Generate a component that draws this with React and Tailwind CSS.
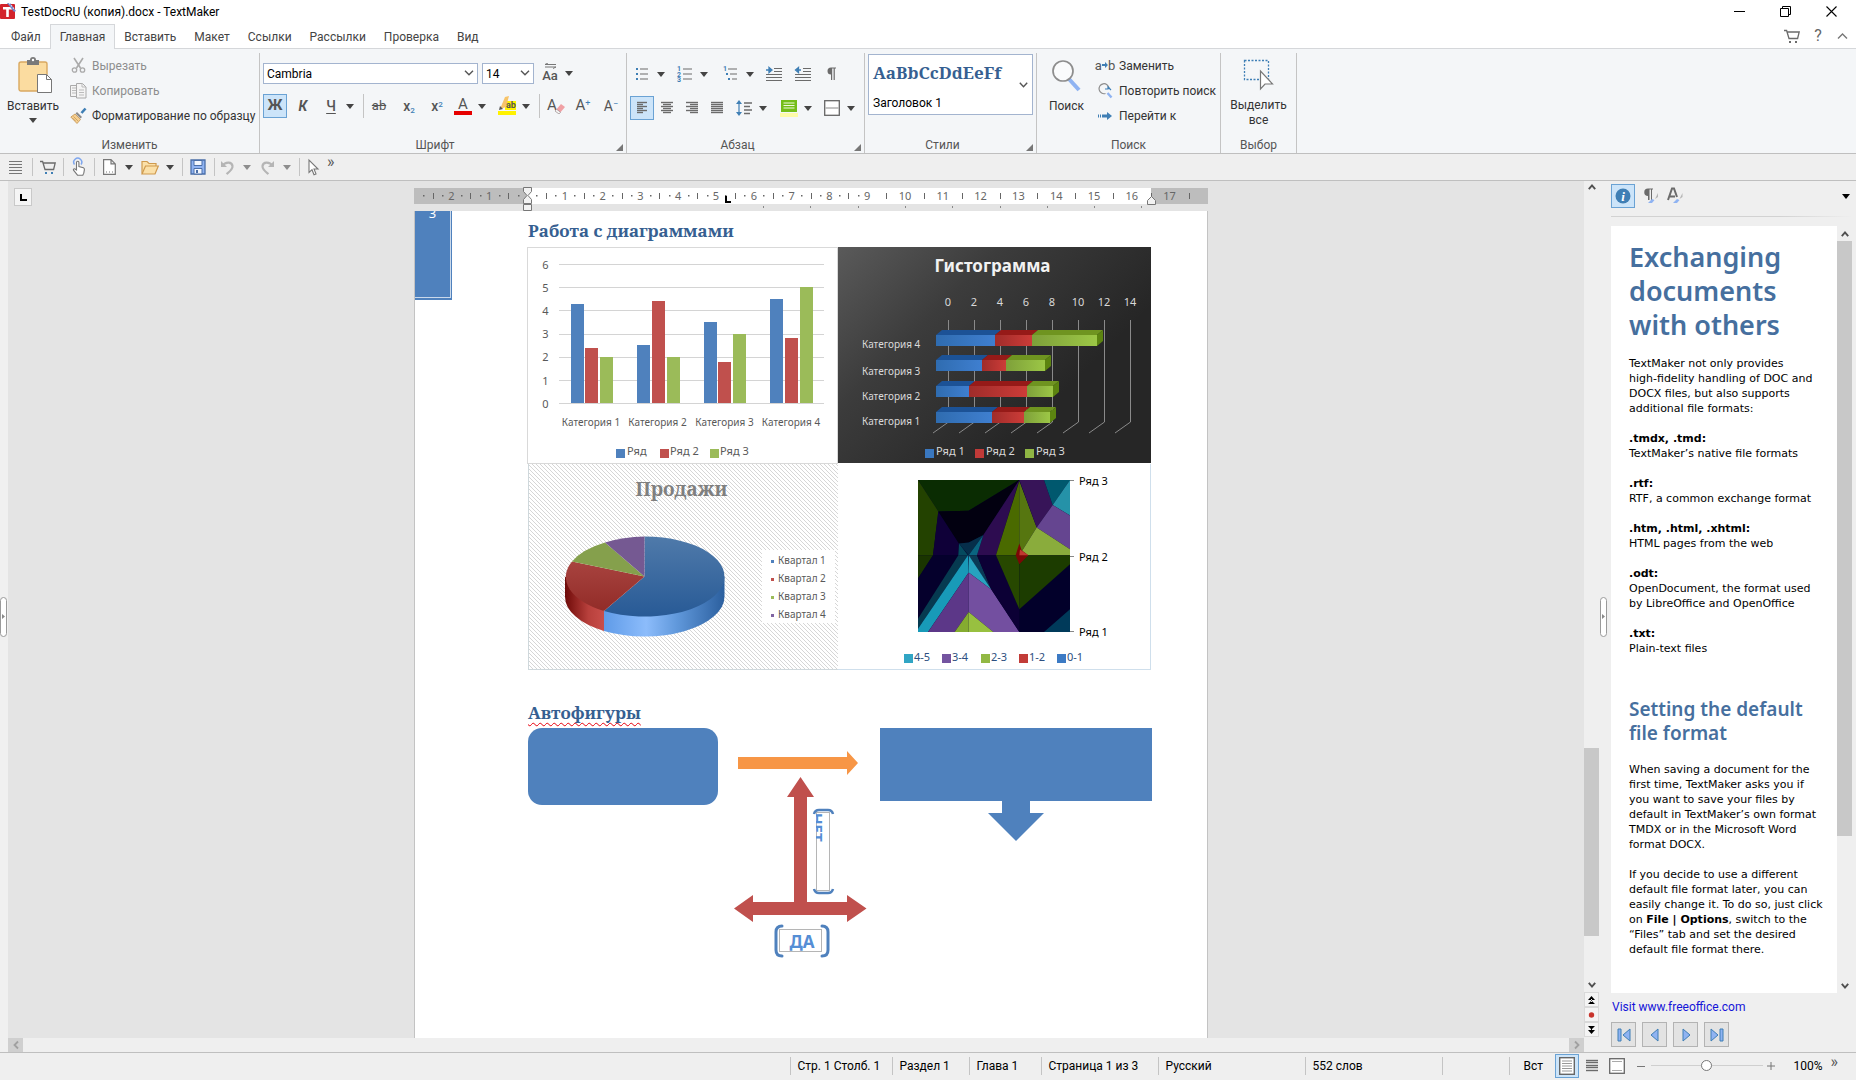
const UI = "font-['Roboto','Liberation_Sans',sans-serif]";
const SERIF = "font-['Noto_Serif','DejaVu_Serif_Condensed','DejaVu_Serif',serif]";

const G = "#6b6b6b";
const B = "#3f7fb5";

function Arrow({ className = "w-3.5 h-6", label = "Ещё", fill = "#444" }) {
  return (
    <button aria-label={label} className={`${className} shrink-0 flex items-center justify-center`}>
      <svg width="8" height="5" viewBox="0 0 8 5"><path d="M0 0h8L4 5z" fill={fill} /></svg>
    </button>
  );
}

function Tool({ label, className = "", active, children }) {
  return (
    <button
      aria-label={label}
      className={`w-6 h-6 shrink-0 flex items-center justify-center text-[#555] ${active ? "bg-[#cce4f9] border border-[#6aa2d4]" : ""} ${className}`}
    >
      {children}
    </button>
  );
}

function Sep({ className = "" }) {
  return <div className={`w-px h-6 shrink-0 bg-[#c4c4c4] ${className}`} />;
}

function Svg({ s = 16, w, h, children }) {
  return (
    <svg width={w || s} height={h || s} viewBox={`0 0 ${w || s} ${h || s}`} fill="none" className="shrink-0 overflow-visible">
      {children}
    </svg>
  );
}

function Lines({ rows, color = G }) {
  return (
    <Svg s={16}>
      {rows.map(([x1, x2, y]) => <path key={y} d={`M${x1} ${y + 0.5}H${x2}`} stroke={color} strokeWidth="1.4" />)}
    </Svg>
  );
}

function Launcher() {
  return (
    <button aria-label="Параметры группы" className="absolute right-0.5 bottom-0.5 w-2 h-2">
      <Svg s={7}><path d="M7 0v7H0z" fill="#777" /></Svg>
    </button>
  );
}

function Group({ title, className, launcher, children }) {
  return (
    <section className={`relative shrink-0 h-[100px] flex flex-col border-r border-[#c4c4c4] ${className}`}>
      <div className="flex-1">{children}</div>
      <div className={`h-4 text-center leading-4 text-[#555] ${launcher ? "pr-4" : ""}`}>{title}</div>
      {launcher && <Launcher />}
    </section>
  );
}

function Cart({ color = G, accent = G }) {
  return (
    <Svg s={16}>
      <path d="M0 2.5h2.6l2.4 8h8.6l1.6-6.5H3.4" stroke={color} strokeWidth="1.3" />
      <path d="M5 13h2v2H5zM11 13h2v2h-2z" fill={accent} />
    </Svg>
  );
}

function TitleBar() {
  return (
    <header className="h-6 shrink-0 bg-white flex items-center text-black">
      <svg width="17" height="17" viewBox="0 0 17 17" className="mr-1 mb-1">
        <rect x="0" y="2" width="15" height="15" rx="1" fill="#d3232b" />
        <path d="M3 5h9v2.4H8.8V15H6.2V7.400H3z" fill="#fff" />
        <path d="M7 1l3 0 6 8-2 1z" fill="#6e83c9" />
        <path d="M9 1l6 7" stroke="#e3e8fa" strokeWidth="1.200" strokeDasharray="1.500 1.500" />
      </svg>
      <h1 className="text-xs pb-px">TestDocRU (копия).docx - TextMaker</h1>
      <div className="ml-auto flex items-center mr-[2px] pb-0.5">
        <button aria-label="Свернуть" className="w-[46px] h-5 flex items-center justify-center"><Svg s={11}><path d="M0 5.5h11" stroke="#000" /></Svg></button>
        <button aria-label="Восстановить" className="w-[46px] h-5 flex items-center justify-center"><Svg s={11}><path d="M.5 2.500h8v8h-8zM2.500 2.500v-2h8v8h-2" stroke="#000" /></Svg></button>
        <button aria-label="Закрыть" className="w-[46px] h-5 flex items-center justify-center"><Svg s={11}><path d="M.5.5l10 10M10.500.5l-10 10" stroke="#000" strokeWidth="1.100" /></Svg></button>
      </div>
    </header>
  );
}

const TABS = ["Файл", "Главная", "Вставить", "Макет", "Ссылки", "Рассылки", "Проверка", "Вид"];

function TabRow() {
  return (
    <nav className="h-[25px] shrink-0 bg-white flex items-end border-b border-[#d5d7da] text-[#444]">
      <div className="flex h-[25px] -mb-px pl-0.5">
        {TABS.map((t, i) => (
          <button
            key={t}
            className={`h-[25px] border-x border-t ${i === 1 ? "px-[9px] bg-[#f4f6f8] border-[#d5d7da]" : "px-2 border-transparent"}`}
          >
            {t}
          </button>
        ))}
      </div>
      <div className="ml-auto flex items-center h-[25px] pr-1">
        <button aria-label="Магазин" className="w-6 flex justify-center"><Cart /></button>
        <button aria-label="Справка" className="w-7 text-base leading-5 text-[#666]">?</button>
        <button aria-label="Свернуть ленту" className="w-5 flex justify-center"><Svg w={11} h={6}><path d="M1 5.500L5.500 1 10 5.500" stroke="#777" strokeWidth="1.400" /></Svg></button>
      </div>
    </nav>
  );
}

function EditGroup() {
  return (
    <Group title="Изменить" className="w-[260px]">
      <div className="flex">
        <button className="w-[66px] mt-1 flex flex-col items-center">
          <svg width="34" height="38" viewBox="0 0 34 38" className="ml-1">
            <rect x="1" y="5" width="28" height="29" rx="2" fill="#fbdca0" stroke="#d9a860" strokeWidth="1.400" />
            <path d="M9 3h3a3 3 0 0 1 6 0h3v5H9z" fill="#7a7a7a" />
            <circle cx="15" cy="3" r="1.200" fill="#fff" />
            <path d="M19.500 17.500h9l5 5v13h-14z" fill="#fff" stroke="#777" />
            <path d="M28.500 17.500v5h5" stroke="#777" fill="none" />
          </svg>
          <span className="mt-[3px] leading-4">Вставить</span>
          <svg width="8" height="5" viewBox="0 0 8 5" className="mt-1"><path d="M0 0h8L4 5z" fill="#444" /></svg>
        </button>
        <div className="flex flex-col">
          <button className="flex items-center h-[25px] gap-[5px] pl-1 text-[#8d8d8d]">
            <Svg s={17}>
              <path d="M4 1l6.500 10M13 1L6.500 11" stroke="#aaa" strokeWidth="1.600" />
              <circle cx="4.500" cy="13" r="2.200" stroke="#aaa" strokeWidth="1.300" /><circle cx="12.500" cy="13" r="2.200" stroke="#aaa" strokeWidth="1.300" />
            </Svg>
            Вырезать
          </button>
          <button className="flex items-center h-[25px] gap-[5px] pl-1 text-[#8d8d8d]">
            <Svg s={17}>
              <path d="M.5 3.500h7v11h-7z" stroke="#aaa" fill="#f4f4f4" />
              <path d="M2 6h4M2 8.500h4M2 11h4" stroke="#bbb" />
              <path d="M6.500 1.500h6l3.500 3.500v11H6.500z" stroke="#aaa" fill="#f4f4f4" />
              <path d="M12 1.500V5h4M9 8h5M9 10.500h5M9 13h5" stroke="#bbb" />
            </Svg>
            Копировать
          </button>
          <button className="flex items-center h-[25px] gap-[5px] pl-1 text-[#333]">
            <Svg s={17}>
              <path d="M15.500 1.500l-4 4.500" stroke={B} strokeWidth="2.600" />
              <path d="M7 5l5 5-1.500 1.500-5-5z" fill="#8a8a8a" />
              <path d="M5 7l5.500 5.500-3.500 4L.8 10z" fill="#f6cf90" stroke="#c39350" strokeWidth=".8" />
              <path d="M3.500 9.500l4.500 4.500M2.500 11l3 3" stroke="#c39350" strokeWidth=".7" />
            </Svg>
            Форматирование по образцу
          </button>
        </div>
      </div>
    </Group>
  );
}

function Combo({ label, value, className }) {
  return (
    <div className={`relative ${className}`}>
      <select aria-label={label} className="block appearance-none w-full h-[21px] pl-[3px] bg-white border border-[#a3b4cf] text-black leading-4 outline-none">
        <option>{value}</option>
      </select>
      <svg width="10" height="6" viewBox="0 0 10 6" className="absolute right-1 top-[7px] pointer-events-none" fill="none">
        <path d="M1 .7l4 4 4-4" stroke="#555" strokeWidth="1.400" />
      </svg>
    </div>
  );
}

function FontGroup() {
  return (
    <Group title="Шрифт" className="w-[367px]" launcher>
      <div className="flex items-center pt-2.5 pl-[3px]">
        <Combo label="Шрифт" value="Cambria" className="w-[215px]" />
        <Combo label="Размер" value="14" className="w-[52px] ml-1" />
        <button aria-label="Регистр" className="ml-1 w-6 h-[21px] flex flex-col items-center text-[#555]">
          <svg width="13" height="6" viewBox="0 0 13 6" fill="none"><path d="M1 1.500h11M1 4h11M4 0L1 1.500M9 5.500L12 4" stroke="#777" /></svg>
          <span className="text-[13px] leading-[14px] font-medium">Aa</span>
        </button>
        <Arrow label="Варианты регистра" className="w-3.5 h-5" />
      </div>
      <div className="flex items-center pt-2.5 pl-[3px]">
        <Tool label="Полужирный" active><b className="text-[15px]">Ж</b></Tool>
        <Tool label="Курсив" className="ml-1"><b className="text-sm italic">К</b></Tool>
        <Tool label="Подчёркнутый" className="ml-1"><span className="text-sm font-medium underline underline-offset-2">Ч</span></Tool>
        <Arrow label="Вид подчёркивания" />
        <Sep className="ml-1.5" />
        <Tool label="Зачёркнутый" className="ml-[3px]"><span className="text-[13px] line-through">ab</span></Tool>
        <Tool label="Нижний индекс" className="ml-1.5"><span className="text-sm font-medium">x<sub className="text-[8px] text-[#3f7fb5]">2</sub></span></Tool>
        <Tool label="Верхний индекс" className="ml-1"><span className="text-sm font-medium">x<sup className="text-[8px] text-[#3f7fb5]">2</sup></span></Tool>
        <Tool label="Цвет шрифта" className="ml-0.5 flex-col">
          <span className="text-[15px] leading-[14px]">A</span><span className="w-[18px] h-1 bg-[#e60000]" />
        </Tool>
        <Arrow label="Цвета шрифта" />
        <Tool label="Выделение" className="ml-1.5">
          <svg width="20" height="20" viewBox="0 0 20 20">
            <rect x="8" y="5" width="11" height="9" fill="#fff200" />
            <path d="M8 1l4-1-3 11-6 2z" fill="#f7c46a" /><path d="M3 10l3 3-4 1z" fill="#555" />
            <text x="9" y="12" fontSize="9" fontWeight="700" fill="#555">ab</text>
            <rect x="1" y="15" width="18" height="4" fill="#fff200" />
          </svg>
        </Tool>
        <Arrow label="Цвета выделения" />
        <Sep className="ml-1.5" />
        <Tool label="Сбросить формат" className="ml-[3px] relative">
          <span className="text-[15px] pr-1.5">A</span>
          <svg width="10" height="10" viewBox="0 0 10 10" className="absolute right-0.5 bottom-1"><path d="M6 0l4 3-6 7-4-3z" fill="#f0a0a4" /><path d="M0 7l4 3 1.500-1.800-4-3z" fill="#f7f7f7" stroke="#888" strokeWidth=".6" /></svg>
        </Tool>
        <Tool label="Увеличить" className="ml-1"><span className="text-[15px]">A<sup className="text-[9px] text-[#3f7fb5]">+</sup></span></Tool>
        <Tool label="Уменьшить" className="ml-1"><span className="text-sm">A<sup className="text-[9px] text-[#3f7fb5]">−</sup></span></Tool>
      </div>
    </Group>
  );
}

function ParagraphGroup() {
  return (
    <Group title="Абзац" className="w-[238px]" launcher>
      <div className="flex items-center pt-[9px] pl-[3px]">
        <Tool label="Маркеры"><Svg s={16}><path d="M2 2h2v2H2zM2 7h2v2H2zM2 12h2v2H2z" fill={B} /><path d="M6 3h8M6 8h8M6 13h8" stroke={G} strokeWidth="1.200" /></Svg></Tool>
        <Arrow label="Виды маркеров" />
        <Tool label="Нумерация" className="ml-[5px]"><Svg s={16}><text x="0" y="5" fontSize="7" fontWeight="700" fill={B}>1</text><text x="0" y="10.500" fontSize="7" fontWeight="700" fill={B}>2</text><text x="0" y="16" fontSize="7" fontWeight="700" fill={B}>3</text><path d="M6 3h9M6 8h9M6 13h9" stroke={G} strokeWidth="1.200" /></Svg></Tool>
        <Arrow label="Виды нумерации" />
        <Tool label="Многоуровневый" className="ml-2"><Svg s={16}><text x="0" y="5" fontSize="7" fontWeight="700" fill={B}>1</text><path d="M3 7h2v2H3zM5 12h2v2H5z" fill={B} /><path d="M5 3h9M7 8h7M9 13h5" stroke={G} strokeWidth="1.200" /></Svg></Tool>
        <Arrow label="Виды списков" />
        <Tool label="Увеличить отступ" className="ml-[5px]"><Svg s={16}><path d="M8 2.500h8M8 5.500h8M0 8.500h16M0 11.500h16M0 14.500h16" stroke={G} strokeWidth="1.200" /><path d="M0 4h4M3 1.500L6 4 3 6.500z" stroke={B} strokeWidth="1.300" fill={B} /></Svg></Tool>
        <Tool label="Уменьшить отступ" className="ml-[5px]"><Svg s={16}><path d="M8 2.500h8M8 5.500h8M0 8.500h16M0 11.500h16M0 14.500h16" stroke={G} strokeWidth="1.200" /><path d="M6 4H3M3.500 1.500L.5 4l3 2.500z" stroke={B} strokeWidth="1.300" fill={B} /></Svg></Tool>
        <Tool label="Непечатаемые знаки" className="ml-1"><Svg s={14}><path d="M7 7.500a3.500 3.500 0 0 1 0-7h5v1h-1.200V13H9.600V1.500H8.200V13H7z" fill={G} /></Svg></Tool>
      </div>
      <div className="flex items-center pt-2.5 pl-[3px]">
        <Tool label="По левому краю" active><Lines rows={[[3, 13, 2], [3, 9, 4], [3, 13, 6], [3, 9, 8], [3, 13, 10], [3, 9, 12]]} /></Tool>
        <Tool label="По центру" className="ml-px"><Lines rows={[[2, 14, 2], [4, 12, 4], [2, 14, 6], [4, 12, 8], [2, 14, 10], [4, 12, 12]]} /></Tool>
        <Tool label="По правому краю" className="ml-px"><Lines rows={[[2, 14, 2], [6, 14, 4], [2, 14, 6], [6, 14, 8], [2, 14, 10], [6, 14, 12]]} /></Tool>
        <Tool label="По ширине" className="ml-px"><Lines rows={[[2, 14, 2], [2, 14, 4], [2, 14, 6], [2, 14, 8], [2, 14, 10], [2, 14, 12]]} /></Tool>
        <Tool label="Интервал" className="ml-[3px]"><Svg s={16}><path d="M3 3v10" stroke={B} strokeWidth="1.200" /><path d="M3 0L6 4H0zM3 16l3-4H0z" fill={B} /><path d="M8 3h8M8 6.500h6M8 10h8M8 13.500h6" stroke={G} strokeWidth="1.300" /></Svg></Tool>
        <Arrow label="Интервалы" />
        <Tool label="Заливка" className="ml-[7px]"><Svg w={18} h={18}><rect x="1" y="1" width="16" height="12" fill="#74bd18" /><path d="M3.500 4h11M3.500 6.500h11M3.500 9h11" stroke="#eefbdc" strokeWidth="1.200" /><rect x="0" y="14" width="18" height="4" fill="#fdfba8" /></Svg></Tool>
        <Arrow label="Цвета заливки" />
        <Tool label="Границы" className="ml-[5px]"><Svg s={16}><rect x=".7" y=".7" width="14.600" height="14.600" fill="#fff" stroke="#666" strokeWidth="1.300" /><path d="M1.500 8h13" stroke="#9a9a9a" strokeWidth="1.200" /></Svg></Tool>
        <Arrow label="Виды границ" />
      </div>
    </Group>
  );
}

function StylesGroup() {
  return (
    <Group title="Стили" className="w-[172px]" launcher>
      <button className="ml-[3px] mt-px w-[165px] h-[61px] bg-white border border-[#a3b4cf] flex items-center text-left">
        <span className="flex-1 pl-1 pt-px">
          <span className={`block text-[17px] leading-7 font-bold text-[#365f91] ${SERIF}`}>AaBbCcDdEeFf</span>
          <span className="block leading-4 mt-2 text-black">Заголовок 1</span>
        </span>
        <svg width="9" height="6" viewBox="0 0 9 6" className="mr-1" fill="none"><path d="M.8.8l3.700 4 3.700-4" stroke="#555" strokeWidth="1.400" /></svg>
      </button>
    </Group>
  );
}

function SearchGroup() {
  return (
    <Group title="Поиск" className="w-[184px]">
      <div className="flex text-[#333]">
        <button className="w-[59px] mt-1.5 flex flex-col items-center">
          <Svg w={31} h={34}><path d="M18 20l10 11" stroke="#8fb3f2" strokeWidth="4" /><circle cx="12" cy="12" r="10" stroke="#8d8d8d" strokeWidth="1.700" fill="#fafbfc" /></Svg>
          <span className="mt-[5px] leading-4">Поиск</span>
        </button>
        <div className="flex flex-col">
          <button className="flex items-center h-[25px] gap-[5px]">
            <span className="w-[18px] flex items-center justify-center text-[13px] text-[#555]">a<Svg w={6} h={6}><path d="M0 2h3V0l3 3-3 3V4H0z" fill={B} /></Svg>b</span>
            Заменить
          </button>
          <button className="flex items-center h-[25px] gap-[5px]">
            <span className="w-[18px] flex justify-center"><Svg s={15}><path d="M9.500 10l4 4.500" stroke="#8fb3f2" strokeWidth="2.400" /><path d="M11 5a5 5 0 1 0-3.500 5.500" stroke="#8d8d8d" strokeWidth="1.200" /><path d="M7 6h3V4l3 3" stroke={B} strokeWidth="1.200" /></Svg></span>
            Повторить поиск
          </button>
          <button className="flex items-center h-[25px] gap-[5px]">
            <span className="w-[18px] flex justify-center"><Svg w={14} h={8}><path d="M0 2.500h1v3H0zM2 2.500h1v3H2zM4 2.500h5V0l5 4-5 4V5.500H4z" fill={B} /></Svg></span>
            Перейти к
          </button>
        </div>
      </div>
    </Group>
  );
}

function SelectGroup() {
  return (
    <Group title="Выбор" className="w-[76px]">
      <button className="w-full mt-1.5 flex flex-col items-center text-[#333]">
        <Svg w={31} h={34}>
          <rect x="1.500" y="1.500" width="24" height="19" stroke={B} strokeWidth="1.300" strokeDasharray="2 1.500" />
          <path d="M17.500 12v18l4.500-5h7.500z" fill="#fff" stroke="#777" strokeWidth="1.200" />
        </Svg>
        <span className="mt-[5px] leading-[15px]">Выделить<br />все</span>
      </button>
    </Group>
  );
}

function Ribbon() {
  return (
    <div className="h-[105px] shrink-0 bg-[#f4f6f8] border-b border-[#bfbfbf] flex pt-1 text-[#333]">
      <EditGroup /><FontGroup /><ParagraphGroup /><StylesGroup /><SearchGroup /><SelectGroup />
    </div>
  );
}

function QuickBar() {
  return (
    <div className="h-[27px] shrink-0 bg-[#efefef] border-b border-[#bfbfbf] flex items-center pl-1">
      <Tool label="Меню"><Svg s={14}><path d="M0 1.500h13M0 4.500h13M0 7.500h13M0 10.500h13M0 13.500h13" stroke="#777" /></Svg></Tool>
      <Sep className="ml-1 h-[18px]" />
      <Tool label="Магазин" className="ml-[3px]"><Cart accent={B} /></Tool>
      <Sep className="ml-[3px] h-[18px]" />
      <Tool label="Сенсорный режим" className="ml-0.5">
        <Svg w={15} h={18}><path d="M3.500 6.500a4 4 0 1 1 6.500 0" stroke="#7ea6ee" strokeWidth="1.500" /><path d="M5.500 12V4.500a1.200 1.200 0 0 1 2.400 0V8.500l4.500 1.200c1 .4 1.100 1 1 2l-.6 3.500-1 2H6.500l-4-5c-.5-1 .8-1.800 1.600-1.200z" fill="#fff" stroke="#777" strokeWidth="1.100" /></Svg>
      </Tool>
      <Sep className="ml-1 h-[18px]" />
      <Tool label="Создать" className="ml-0.5"><Svg w={13} h={16}><path d="M.6.6h7.400l4.300 4.300v10.500H.6zM8 .6v4.300h4.300" fill="#fff" stroke="#777" strokeWidth="1.200" /><path d="M3 13h1M6 13h1M9 13h1" stroke="#777" /></Svg></Tool>
      <Arrow label="Шаблоны" className="w-4 h-6" />
      <Tool label="Открыть" className="ml-px"><Svg w={18} h={15}><path d="M1 13.500V1.500h5l2 2h7v3" fill="#fbe0a8" stroke="#cf9a4e" strokeWidth="1.200" /><path d="M1 14l3.500-8H17.300L14 14z" fill="#fbe0a8" stroke="#cf9a4e" strokeWidth="1.200" /></Svg></Tool>
      <Arrow label="Недавние" className="w-4 h-6" />
      <Sep className="ml-1 h-[18px]" />
      <Tool label="Сохранить" className="ml-[3px]"><Svg s={16}><path d="M1 1h14v14H1z" fill="#8fb3f2" stroke="#4b6fa8" strokeWidth="1.300" /><path d="M4 1.500h8v5H4z" fill="#f2f6fd" stroke="#4b6fa8" /><path d="M4 9.500h8V15H4z" fill="#f2f6fd" stroke="#4b6fa8" /><path d="M6 11h2v3H6z" fill="#4b6fa8" /></Svg></Tool>
      <Sep className="ml-1 h-[18px]" />
      <Tool label="Отменить"><Svg s={15}><path d="M2 6c4-5 10-4 10.500 0 .4 3.500-3.500 6-6 8" stroke="#b5b5b5" strokeWidth="2.200" /><path d="M1 1v6h6z" fill="#b5b5b5" /></Svg></Tool>
      <Arrow label="История" fill="#8d8d8d" className="w-4 h-6" />
      <Tool label="Вернуть"><Svg s={15}><path d="M13 6c-4-5-10-4-10.500 0-.4 3.500 3.500 6 6 8" stroke="#b5b5b5" strokeWidth="2.200" /><path d="M14 1v6H8z" fill="#b5b5b5" /></Svg></Tool>
      <Arrow label="История возврата" fill="#8d8d8d" className="w-4 h-6" />
      <Sep className="ml-1 h-[18px]" />
      <Tool label="Выбор объектов" className="ml-px"><Svg w={11} h={17}><path d="M1 1v12.500l3-2.800 2 5 2-.8-2-4.900h4z" fill="#fff" stroke="#777" strokeWidth="1.100" /></Svg></Tool>
      <button aria-label="Другие команды" className="ml-0.5 text-base leading-4 pb-2.5 text-[#555]">»</button>
    </div>
  );
}

/* Ruler: origin at 527, 37.8 units per centimetre */
function Ruler() {
  const nums = Array.from({ length: 19 }, (_, i) => i - 2).filter((n) => n !== 0 && n < 17);
  const cm = (n) => 527 + n * 37.8;
  return (
    <svg width="794" height="23" viewBox="414 188 794 23" className="shrink-0 overflow-visible font-['Noto_Sans',sans-serif]">
      <rect x="414" y="188" width="113" height="16" fill="#bdbdbd" />
      <rect x="527" y="188" width="624" height="16" fill="#fff" />
      <rect x="1151" y="188" width="57" height="16" fill="#bdbdbd" />
      {[...nums, 17].map((n) => (
        <text key={n} x={cm(n)} y="200" textAnchor="middle" fontSize="11" fill="#666">{Math.abs(n)}</text>
      ))}
      {Array.from({ length: 21 }, (_, i) => i - 2.5).map((n) => (
        <rect key={n} x={Math.round(cm(n))} y="193" width="1" height="6" fill="#666" />
      ))}
      {Array.from({ length: 24 }, (_, i) => -2.75 + i * 0.5).map((n) => (
        <rect key={n} x={Math.round(cm(n))} y="195" width="1.500" height="1.500" fill="#666" />
      ))}
      {Array.from({ length: 9 }, (_, i) => 763 + i * 47.3).map((x) => (
        <rect key={x} x={Math.round(x)} y="206" width="1" height="2" fill="#888" />
      ))}
      <path d="M523.500 187.500h8v4l-3.500 4 3.500 4v4h-8v-4l3.500-4-3.500-4zM523.500 204.500h8v6h-8z" fill="#f2f2f2" stroke="#777" />
      <path d="M1147.500 204.500v-4l4-4 4 4v4z" fill="#f2f2f2" stroke="#777" />
      <path d="M726 196v6h5" stroke="#000" strokeWidth="2" fill="none" />
    </svg>
  );
}

const BLUE = "#4f81bd", RED = "#c0504d", GREEN = "#9bbb59";

function BarChart() {
  const bars = [
    [571, 304, 585, 348, 600, 357],
    [637, 345, 652, 301, 667, 357],
    [704, 322, 718, 362, 733, 334],
    [770, 299, 785, 338, 800, 287],
  ];
  return (
    <svg width="311" height="217" viewBox="527 247 311 217" fontSize="10" fill="#595959" role="img" aria-label="Диаграмма">
      <rect x="527.500" y="247.500" width="310" height="216" fill="#fff" stroke="#d9d9d9" />
      {[6, 5, 4, 3, 2, 1, 0].map((n, i) => (
        <g key={n}>
          <rect x="559" y={Math.round(264 + i * 23.2)} width="265" height="1" fill="#d4d4d4" />
          <text x="545.500" y={268.5 + i * 23.2} textAnchor="middle" fontSize="11">{n}</text>
        </g>
      ))}
      {bars.map(([a, ay, b, by, c, cy]) => (
        <g key={a}>
          <rect x={a} y={ay} width="13" height={403 - ay} fill={BLUE} />
          <rect x={b} y={by} width="13" height={403 - by} fill={RED} />
          <rect x={c} y={cy} width="13" height={403 - cy} fill={GREEN} />
        </g>
      ))}
      {[591, 657.5, 724.5, 791].map((x, i) => <text key={x} x={x} y="426" textAnchor="middle">{`Категория ${i + 1}`}</text>)}
      {[[616, 627, "Ряд", BLUE], [660, 670, "Ряд 2", RED], [710, 720, "Ряд 3", GREEN]].map(([x, tx, t, c]) => (
        <g key={t}><rect x={x} y="449" width="9" height="9" fill={c} /><text x={tx} y="455" fontSize="11">{t}</text></g>
      ))}
    </svg>
  );
}

function Gistogram() {
  const rows = [
    [335, 995, 1032, 1097, "Категория 4", 348],
    [360, 982, 1006, 1045, "Категория 3", 375],
    [386, 969, 1027, 1053, "Категория 2", 400],
    [412, 992, 1024, 1050, "Категория 1", 425],
  ];
  return (
    <svg width="313" height="217" viewBox="838 247 313 217" fontSize="10" fill="#d9d9d9" role="img" aria-label="Гистограмма">
      <defs>
        <linearGradient id="dark" x1="0" y1="0" x2="1" y2=".7"><stop offset="0" stopColor="#5a5a5a" /><stop offset=".35" stopColor="#3c3c3c" /><stop offset=".8" stopColor="#262626" /></linearGradient>
        <linearGradient id="bf"><stop offset="0" stopColor="#2f6cb0" /><stop offset="1" stopColor="#3f7fd0" /></linearGradient>
        <linearGradient id="rf"><stop offset="0" stopColor="#a02c2a" /><stop offset="1" stopColor="#cc3c38" /></linearGradient>
        <linearGradient id="gf"><stop offset="0" stopColor="#7ea03a" /><stop offset="1" stopColor="#9cc746" /></linearGradient>
      </defs>
      <rect x="838" y="247" width="313" height="216" fill="url(#dark)" />
      <text x="992.500" y="272" textAnchor="middle" fontSize="17" fontWeight="700" fill="#f2f2f2">Гистограмма</text>
      {[0, 2, 4, 6, 8, 10, 12, 14].map((n, i) => (
        <g key={n}>
          <text x={948 + i * 26} y="306" textAnchor="middle" fontSize="11">{n}</text>
          <path d={`M${948.5 + i * 26} 320V422L${933 + i * 26} 433`} stroke="#8a8a8a" fill="none" />
        </g>
      ))}
      {rows.map(([y, a, b, c, label, ty]) => (
        <g key={label}>
          <path d={`M936 ${y}l6-5H${a + 6}l-6 5z`} fill="#1c5296" />
          <path d={`M${a} ${y}l6-5H${b + 6}l-6 5z`} fill="#961a18" />
          <path d={`M${b} ${y}l6-5H${c + 6}l-6 5z`} fill="#6f9420" />
          <path d={`M${c} ${y}l6-5v11l-6 5z`} fill="#5c8410" />
          <rect x="936" y={y} width={a - 936} height="11" fill="url(#bf)" />
          <rect x={a} y={y} width={b - a} height="11" fill="url(#rf)" />
          <rect x={b} y={y} width={c - b} height="11" fill="url(#gf)" />
          <text x="862" y={ty}>{label}</text>
        </g>
      ))}
      {[[925, "Ряд 1", "#3a78c0"], [975, "Ряд 2", "#c03a38"], [1025, "Ряд 3", "#8fb544"]].map(([x, t, c]) => (
        <g key={t}><rect x={x} y="449" width="9" height="9" fill={c} /><text x={x + 11} y="455" fontSize="11">{t}</text></g>
      ))}
    </svg>
  );
}

function PieChart() {
  return (
    <svg width="311" height="206" viewBox="527 464 311 206" fontSize="10" fill="#595959" role="img" aria-label="Продажи">
      <defs>
        <pattern id="hatch" width="4" height="4" patternUnits="userSpaceOnUse"><rect width="4" height="4" fill="#fff" /><path d="M0 0l4 4M-1 3l2 2M3-1l2 2" stroke="#d6d6d6" strokeWidth="1" /></pattern>
        <linearGradient id="pb" x1="0" y1="0" x2="0" y2="1"><stop offset="0" stopColor="#4f7aaa" /><stop offset="1" stopColor="#285a96" /></linearGradient>
        <linearGradient id="pr" x1="0" y1="0" x2="0" y2="1"><stop offset="0" stopColor="#a8433f" /><stop offset="1" stopColor="#922c28" /></linearGradient>
        <linearGradient id="sb"><stop offset="0" stopColor="#5f9be8" /><stop offset=".35" stopColor="#8cbcfb" /><stop offset=".6" stopColor="#6199dc" /><stop offset="1" stopColor="#2b5f9e" /></linearGradient>
        <linearGradient id="sr"><stop offset="0" stopColor="#6e0a08" /><stop offset=".6" stopColor="#b8403c" /><stop offset="1" stopColor="#c84e4a" /></linearGradient>
      </defs>
      <rect x="528.500" y="463.500" width="310" height="206" fill="url(#hatch)" stroke="#cfd8dc" />
      <text x="681.500" y="496" textAnchor="middle" fontSize="19" fontWeight="700" fill="#7f7f7f" className={SERIF}>Продажи</text>
      <path d="M565 576.500v20A80 40 0 0 0 604 631v-20z" fill="url(#sr)" />
      <path d="M724.500 576.500v20A80 40 0 0 1 604 631v-20z" fill="url(#sb)" />
      <path d="M644.500 576.500V536.500A80 40 0 1 1 604 611z" fill="url(#pb)" />
      <path d="M644.500 576.500L604 611A80 40 0 0 1 572 561.500z" fill="url(#pr)" />
      <path d="M644.500 576.500L572 561.500A80 40 0 0 1 605 542.500z" fill="#85a04c" />
      <path d="M644.500 576.500L605 542.500A80 40 0 0 1 644.500 536.500z" fill="#755992" />
      <rect x="762" y="550" width="73" height="73" fill="#fff" />
      {[BLUE, RED, GREEN, "#8064a2"].map((c, i) => (
        <g key={c}><rect x="771" y={560 + i * 18} width="3" height="3" fill={c} /><text x="778" y={564 + i * 18}>{`Квартал ${i + 1}`}</text></g>
      ))}
    </svg>
  );
}

const FACETS = [
  ["264,75 568,75 416,167 325,169", "#0a2c02"], ["264,75 325,169 309,300 264,300", "#234200"], ["264,300 309,300 264,370", "#1a3500"],
  ["325,169 309,300 385,300 387,265", "#0f0038"], ["325,169 416,167 568,75 460,240 416,262 387,265", "#020010"],
  ["568,75 460,240 441,300 498,300", "#2d0c50"], ["568,78 498,300 568,300", "#4a6a00"], ["568,78 620,217 568,300", "#567610"],
  ["568,75 642,75 668,150 620,217", "#371458"], ["642,75 720,75 668,150", "#00586e"], ["720,75 720,181 668,150", "#2592a8"],
  ["668,150 720,181 720,282 620,217", "#654590"], ["620,217 720,282 720,300 568,300", "#8aac3c"],
  ["387,265 416,262 460,240 416,300", "#062e4a"], ["387,265 385,300 414,300", "#054a5e"], ["460,240 441,300 416,300", "#0a6480"],
  ["309,300 385,300 264,490 264,370", "#05002c"], ["385,300 414,300 264,520 264,490", "#063a50"],
  ["414,300 416,352 294,530 264,530 264,520", "#189ab8"], ["414,300 441,300 484,403", "#0a3a55"], ["416,300 484,403 416,352", "#27a3bf"],
  ["416,352 416,470 374,530 294,530", "#5c3788"], ["416,352 484,403 568,530 490,530 416,470", "#734fa0"],
  ["416,470 374,530 416,530", "#85ac30"], ["416,470 490,530 416,530", "#98c040"],
  ["441,300 498,300 568,462 568,530 484,403", "#0c0035"], ["498,300 568,300 568,462", "#274800"],
  ["568,300 720,300 720,327 568,462", "#1c3c00"], ["720,462 720,530 642,530", "#003a5a"],
  ["568,265 575,285 595,300 568,327 557,300", "#7a0806"], ["570,283 595,300 568,300", "#c03830"],
];

function SurfaceChart() {
  return (
    <svg width="313" height="206" viewBox="838 464 313 206" fontSize="11" role="img" aria-label="Поверхность">
      <rect x="837.500" y="463.500" width="313" height="206" fill="#fff" stroke="#cfdfec" />
      <svg x="918" y="480" width="152" height="152" viewBox="264 75 456 455" preserveAspectRatio="none">
        <rect x="264" y="75" width="456" height="455" fill="#02002a" />
        {FACETS.map(([p, c]) => <polygon key={p} points={p} fill={c} />)}
      </svg>
      {[[480.5, "Ряд 3"], [556.5, "Ряд 2"], [631.5, "Ряд 1"]].map(([y, t]) => (
        <g key={t}><path d={`M1070 ${y}h4`} stroke="#888" /><text x="1079" y={y + 4} fill="#000">{t}</text></g>
      ))}
      {[[904, "4-5", "#31a5c4"], [942, "3-4", "#7454a0"], [981, "2-3", "#92b844"], [1019, "1-2", "#c23c38"], [1057, "0-1", "#3c7ac4"]].map(([x, t, c]) => (
        <g key={t}><rect x={x} y="654" width="9" height="9" fill={c} /><text x={x + 10} y="661" fill="#2d4f80" fontSize="11">{t}</text></g>
      ))}
    </svg>
  );
}

function Shapes() {
  return (
    <svg width="626" height="240" viewBox="528 728 626 240" className="block font-['Noto_Sans',sans-serif]" role="img" aria-label="Автофигуры">
      <rect x="528" y="728" width="190" height="77" rx="14" fill={BLUE} />
      <path d="M738 757h109v-6l11 12-11 12v-6H738z" fill="#f79646" />
      <path d="M880 728h272v73h-122v12h14l-28 28-28-28h14v-12H880z" fill={BLUE} />
      <path d="M800.500 777l13.500 20h-7v105h40v-7l19.500 13.500L847 922v-7h-94v7l-19-13.500L753 895v7h41V797h-7z" fill={RED} />
      <rect x="816.500" y="812.500" width="13" height="78" fill="#fff" stroke="#b5b5b5" />
      <path d="M814 814q1-4 5-4h9q4 0 5 4M814 889q1 4 5 4h9q4 0 5-4" stroke={BLUE} strokeWidth="2.500" fill="none" />
      <clipPath id="clip"><rect x="816" y="812" width="14" height="78" /></clipPath>
      <g clipPath="url(#clip)"><text transform="translate(812 813) rotate(90)" fontSize="15" fontWeight="700" fill="#558ed5">НЕТ</text></g>
      <rect x="779.500" y="929.500" width="42" height="22" fill="#fff" stroke="#b5b5b5" />
      <path d="M782 926q-6 0-6 6v18q0 6 6 6M822 926q6 0 6 6v18q0 6-6 6" stroke={BLUE} strokeWidth="3" strokeLinecap="round" fill="none" />
      <text x="802" y="948" textAnchor="middle" fontSize="17" fontWeight="700" fill="#558ed5">ДА</text>
    </svg>
  );
}

function SideHandle() {
  return (
    <button aria-label="Показать панель" className="w-[7px] h-10 border border-[#9a9a9a] rounded-sm bg-white flex items-center justify-center">
      <svg width="3" height="5" viewBox="0 0 3 5"><path d="M0 0l3 2.500L0 5z" fill="#888" /></svg>
    </button>
  );
}

function DocumentArea() {
  return (
    <main className="flex-1 min-w-0 flex flex-col bg-[#e4e4e4]">
      <div className="flex pt-[7px] shrink-0">
        <div className="w-[30px] pl-1.5 shrink-0">
          <button aria-label="Тип табуляции" className="w-[18px] h-[18px] bg-[#f5f5f5] border border-[#c9c9c9] flex items-center justify-center">
            <Svg s={7}><path d="M1 0v6h6" stroke="#000" strokeWidth="2" /></Svg>
          </button>
        </div>
        <div className="flex-1 flex justify-center"><Ruler /></div>
      </div>
      <div className="flex-1 min-h-0 flex justify-center pl-[30px] overflow-hidden">
        <article className="relative w-[794px] shrink-0 bg-white border-x border-[#c3c3c3] pl-[113px] pt-2 overflow-hidden">
          <div className="absolute left-0 top-0 w-[37px] h-[89px] bg-[#4f81bd] pr-px">
            <div className="h-[87px] border-r border-b border-white/70 text-white text-[13px] leading-none flex justify-center items-start font-['Noto_Sans',sans-serif]">
              <span className="-mt-1">3</span>
            </div>
          </div>
          <h2 className={`text-[17px] leading-6 font-bold text-[#365f91] ${SERIF}`}>Работа с диаграммами</h2>
          <div className="mt-1 -ml-px w-[624px] grid grid-cols-[311px_313px] font-['Noto_Sans',sans-serif]">
            <BarChart /><Gistogram /><PieChart /><SurfaceChart />
          </div>
          <h2 className={`mt-[31px] text-[17px] leading-6 font-bold text-[#365f91] ${SERIF}`}>
            <span className="underline decoration-wavy decoration-1 decoration-red-600 underline-offset-[3px] [text-decoration-skip-ink:none]">Автофигуры</span>
          </h2>
          <div className="mt-[3px]"><Shapes /></div>
        </article>
      </div>
      <div className="h-3.5 shrink-0 bg-[#efefef] flex justify-between">
        <button aria-label="Влево" className="w-[15px] bg-[#cfcfcf] flex items-center justify-center"><Svg w={6} h={8}><path d="M5 .5L1.500 4 5 7.500" stroke="#a0a0a0" strokeWidth="1.800" /></Svg></button>
        <button aria-label="Вправо" className="w-[15px] bg-[#cfcfcf] flex items-center justify-center"><Svg w={6} h={8}><path d="M1 .5L4.500 4 1 7.500" stroke="#a0a0a0" strokeWidth="1.800" /></Svg></button>
      </div>
    </main>
  );
}

function Chevron({ up }) {
  return <Svg w={8} h={6}><path d={up ? "M.8 5.200L4 1.500l3.200 3.700" : "M.8.8L4 4.500 7.200.8"} stroke="#505050" strokeWidth="1.900" /></Svg>;
}

function MainScroll() {
  return (
    <div className="w-[15px] shrink-0 bg-[#efefef] flex flex-col">
      <button aria-label="Вверх" className="h-3 flex items-center justify-center"><Chevron up /></button>
      <div className="flex-1 flex flex-col">
        <div className="grow-[556]" /><div className="grow-[188] bg-[#c8c8c8]" /><div className="grow-[41]" />
      </div>
      <button aria-label="Вниз" className="h-[15px] flex items-center justify-center"><Chevron /></button>
      {[
        ["Предыдущая страница", <path key="a" d="M0 4h7L3.500 0zM3 3h1v3H3zM0 8h7L3.500 4.500z" fill="#000" />],
        ["Тип объекта", <circle key="b" cx="3.500" cy="4" r="2.700" fill="#c8342c" />],
        ["Следующая страница", <path key="c" d="M0 0h7L3.500 3.500zM3 2h1v3H3zM0 4h7L3.500 8z" fill="#000" />],
      ].map(([l, p]) => (
        <button key={l} aria-label={l} className="h-[15px] border border-[#d9d9d9] bg-[#f4f4f4] flex items-center justify-center">
          <Svg w={7} h={8}>{p}</Svg>
        </button>
      ))}
      <div className="h-[15px]" />
    </div>
  );
}

const FORMATS = [
  [".tmdx, .tmd:", "TextMaker’s native file formats"],
  [".rtf:", "RTF, a common exchange format"],
  [".htm, .html, .xhtml:", "HTML pages from the web"],
  [".odt:", "OpenDocument, the format used\nby LibreOffice and OpenOffice"],
  [".txt:", "Plain-text files"],
];

const NAV = [
  ["В начало", "M1 1h3v12H1zM13 1v12L6 7z"],
  ["Назад", "M10 1v12L3 7z"],
  ["Вперёд", "M4 1v12l7-6z"],
  ["В конец", "M1 1v12l7-6zM10 1h3v12h-3z"],
];

function HelpPanel() {
  return (
    <aside className="w-[257px] shrink-0 bg-[#efefef] flex">
      <div className="w-3 shrink-0 flex items-center pl-px"><SideHandle /></div>
      <div className="flex-1 flex flex-col min-w-0 pr-1">
        <div className="flex items-center pt-[3px] h-[27px] shrink-0">
          <Tool label="Сведения" active><Svg s={16}><circle cx="8" cy="8" r="7.500" fill="#3f7fb5" /><text x="8" y="12.500" textAnchor="middle" fontSize="13" fontStyle="italic" fontWeight="700" fill="#fff" className="font-['Liberation_Serif',serif]">i</text></Svg></Tool>
          <Tool label="Формат абзаца" className="ml-1">
            <Svg s={16}><path d="M5 8a3.700 3.700 0 0 1 0-7.500h5v1H9V12H8V1.500H6.500V12H5z" fill={G} /><path d="M15 5v4l-3 2z" fill="#b5b5b5" /><path d="M5 15l4-4 2.500 1L9 15z" fill="#8fb3f2" /></Svg>
          </Tool>
          <Tool label="Формат символов">
            <Svg s={16}><path d="M1 12L5 .5h2L10 9M3 8.500h5" stroke={G} strokeWidth="2" /><path d="M15.500 5v4l-3 2z" fill="#b5b5b5" /><path d="M6 15l4-4 2.500 1L10 15z" fill="#8fb3f2" /></Svg>
          </Tool>
          <Arrow label="Меню панели" className="ml-auto w-3 h-6" fill="#000" />
        </div>
        <div className="h-px mt-2 mb-px shrink-0 bg-linear-to-r from-[#d2d2d2] from-70% to-[#efefef]" />
        <div className="flex-1 min-h-0 mt-2 flex bg-white">
          <div className="flex-1 min-w-0 overflow-hidden pl-[18px] pt-3.5 text-black text-[11px] leading-[15px] whitespace-pre font-['DejaVu_Sans',sans-serif]">
            <h2 className="text-[27px] leading-[34px] font-semibold text-[#466f9e] font-['Noto_Sans',sans-serif]">{"Exchanging\ndocuments\nwith others"}</h2>
            <p className="mt-3.5">{"TextMaker not only provides\nhigh-fidelity handling of DOC and\nDOCX files, but also supports\nadditional file formats:"}</p>
            {FORMATS.map(([k, v]) => <p key={k} className="mt-[15px]"><b className="block">{k}</b>{v}</p>)}
            <h3 className="mt-[41px] text-[19px] leading-6 font-semibold text-[#466f9e] font-['Noto_Sans',sans-serif]">{"Setting the default\nfile format"}</h3>
            <p className="mt-[17px]">{"When saving a document for the\nfirst time, TextMaker asks you if\nyou want to save your files by\ndefault in TextMaker’s own format\nTMDX or in the Microsoft Word\nformat DOCX."}</p>
            <p className="mt-[15px]">
              <span className="block">{"If you decide to use a different\ndefault file format later, you can\neasily change it. To do so, just click"}</span>
              <span className="block">on <b>File | Options</b>, switch to the</span>
              <span className="block">{"“Files” tab and set the desired\ndefault file format there."}</span>
            </p>
          </div>
          <div className="w-[15px] shrink-0 bg-[#efefef] flex flex-col">
            <button aria-label="Вверх" className="h-[15px] flex items-center justify-center"><Chevron up /></button>
            <div className="flex-1 flex flex-col"><div className="grow-[595] bg-[#c8c8c8]" /><div className="grow-[142]" /></div>
            <button aria-label="Вниз" className="h-[15px] flex items-center justify-center"><Chevron /></button>
          </div>
        </div>
        <div className="h-[59px] shrink-0 pl-px">
          <a href="#freeoffice" className="block mt-1.5 leading-4 text-[#1414d8]">Visit www.freeoffice.com</a>
          <div className="flex gap-1.5 mt-[7px] -ml-px">
            {NAV.map(([l, d]) => (
              <button key={l} aria-label={l} className="w-[25px] h-[25px] bg-[#e3e3e3] border border-[#b3b3b3] flex items-center justify-center">
                <Svg s={14}><path d={d} fill="#8fb3f2" stroke="#3f7fb5" /></Svg>
              </button>
            ))}
          </div>
        </div>
      </div>
    </aside>
  );
}

function StatusBar() {
  return (
    <footer className="h-7 shrink-0 bg-[#efefef] border-t border-[#bfbfbf] flex items-center justify-end text-black pb-0.5">
      {[
        ["w-[102px]", "Стр. 1 Столб. 1"], ["w-[77px]", "Раздел 1"], ["w-[72px]", "Глава 1"], ["w-[117px]", "Страница 1 из 3"],
        ["w-[147px]", "Русский"], ["w-[137px]", "552 слов"], ["w-[67px]", ""],
      ].map(([w, t]) => <div key={w} className={`${w} shrink-0 h-[18px] leading-[18px] border-l border-[#c4c4c4] pl-1.5 whitespace-nowrap`}>{t}</div>)}
      <div className="w-[46px] shrink-0 h-[18px] leading-[18px] border-l border-[#c4c4c4] pl-[13px]">Вст</div>
      <Tool label="Обычный" active><Svg w={16} h={18}><rect x=".7" y=".7" width="14.600" height="16.600" fill="#fff" stroke="#666" strokeWidth="1.400" /><path d="M3 4h10M3 6.500h10M3 9h10M3 11.500h10M3 14h10" stroke="#999" /></Svg></Tool>
      <Tool label="Непрерывный" className="ml-px"><Lines rows={[[2, 14, 2], [2, 14, 4], [2, 14, 7], [2, 14, 9], [2, 14, 12]]} /></Tool>
      <Tool label="Структура" className="ml-px"><Svg s={16}><rect x=".7" y=".7" width="14.600" height="14.600" fill="#fff" stroke="#666" strokeWidth="1.300" /><path d="M3 3.500h10M3 12.500h10" stroke="#aaa" /></Svg></Tool>
      <button aria-label="Уменьшить масштаб" className="ml-1 w-4 flex justify-center"><Svg s={8}><path d="M0 4.500h8" stroke="#777" /></Svg></button>
      <input
        type="range" aria-label="Масштаб" defaultValue="49"
        className="appearance-none bg-transparent ml-0.5 w-[112px] h-4 outline-none [&::-webkit-slider-runnable-track]:h-px [&::-webkit-slider-runnable-track]:bg-[#cfcfcf] [&::-webkit-slider-thumb]:appearance-none [&::-webkit-slider-thumb]:w-[11px] [&::-webkit-slider-thumb]:h-[11px] [&::-webkit-slider-thumb]:-mt-[5px] [&::-webkit-slider-thumb]:rounded-full [&::-webkit-slider-thumb]:bg-white [&::-webkit-slider-thumb]:border [&::-webkit-slider-thumb]:border-[#777]"
      />
      <button aria-label="Увеличить масштаб" className="w-4 flex justify-center"><Svg s={8}><path d="M0 4h8M4 0v8" stroke="#777" /></Svg></button>
      <span className="ml-[14px]">100%</span>
      <button aria-label="Ещё" className="ml-2 pb-2 mr-[18px] text-base leading-4 text-[#555]">»</button>
    </footer>
  );
}

export default function App() {
  return (
    <div className={`h-screen flex flex-col overflow-hidden text-xs ${UI}`}>
      <TitleBar />
      <TabRow />
      <Ribbon />
      <QuickBar />
      <div className="flex-1 min-h-0 flex">
        <div className="w-2 shrink-0 bg-[#f0f0f0] flex items-center"><SideHandle /></div>
        <DocumentArea />
        <MainScroll />
        <HelpPanel />
      </div>
      <StatusBar />
    </div>
  );
}
